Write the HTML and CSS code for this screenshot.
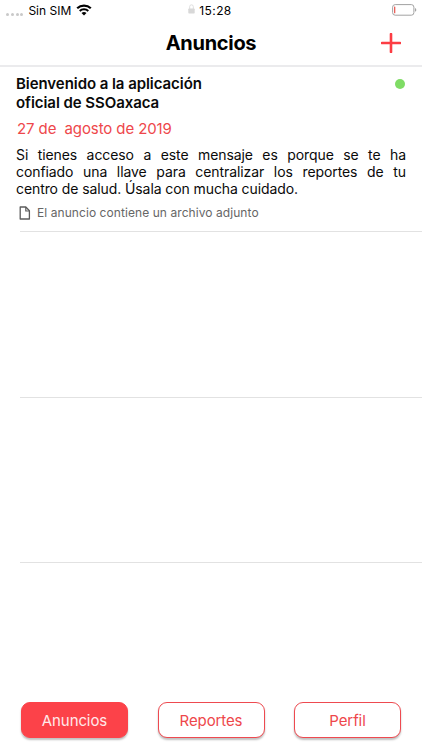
FILE: index.html
```html
<!DOCTYPE html>
<html lang="es">
<head>
  <meta charset="UTF-8" />
  <meta name="viewport" content="width=device-width, initial-scale=1.0" />
  <title>Anuncios</title>
  <link rel="stylesheet" href="styles.css">
</head>
<body>

  <!-- Barra de estado -->
  <div class="status-bar">
    <div class="carrier">
      <span class="signal"><i></i><i></i><i></i><i></i></span>
      <span class="carrier-name">Sin SIM</span>
      <svg class="wifi" viewBox="0 0 16 12" width="16" height="12">
        <path d="M1.2 4.3a9.8 9.8 0 0 1 13.6 0" fill="none" stroke="#000" stroke-width="2.2" />
        <path d="M3.7 7a6.2 6.2 0 0 1 8.6 0" fill="none" stroke="#000" stroke-width="2" />
        <path d="M8 11.6L5.5 9.1a3.6 3.6 0 0 1 5 0z" fill="#000" />
      </svg>
    </div>
    <div class="clock">
      <svg class="lock" viewBox="0 0 7 10" width="7" height="10">
        <path d="M1.7 5V2.6a1.8 1.8 0 0 1 3.6 0V5" fill="none" stroke="#dedede" />
        <rect x="0.3" y="4.5" width="6.4" height="5" rx="0.7" fill="#d8d8d8" />
      </svg>
      <span>15:28</span>
    </div>
    <svg class="battery" viewBox="0 0 25 12" width="25" height="12">
      <rect x="0.6" y="0.6" width="21.3" height="10.6" rx="2.6" fill="none" stroke="#a2a2a2" />
      <rect x="2.1" y="2.5" width="1.2" height="6.8" rx="0.5" fill="#e8504a" />
      <path d="M23 4v3.8c1.8-.6 1.8-3.2 0-3.8z" fill="#a2a2a2" />
    </svg>
  </div>

  <!-- Encabezado -->
  <header class="navbar">
    <h1>Anuncios</h1>
    <svg class="add" viewBox="0 0 20 20" width="20" height="20">
      <path d="M10 1v18M1 10h18" stroke="#fc3d44" stroke-width="2.6" stroke-linecap="round" />
    </svg>
  </header>

  <!-- Lista de anuncios -->
  <main class="list">
    <article class="row">
      <div class="row-head">
        <h2>Bienvenido a la aplicación<br>oficial de SSOaxaca</h2>
        <span class="dot"></span>
      </div>
      <p class="date">27 de&nbsp; agosto de 2019</p>
      <div class="message">
        <p>Si tienes acceso a este mensaje es porque se te ha</p>
        <p>confiado una llave para centralizar los reportes de tu</p>
        <p class="last">centro de salud. Úsala con mucha cuidado.</p>
      </div>
      <div class="attachment">
        <svg viewBox="0 0 12 14" width="12" height="14">
          <path d="M1.2 1h5.6L10.4 4.8V13H1.2z" fill="none" stroke="#5c5c5c" stroke-width="1.3" stroke-linejoin="round" />
          <path d="M6.8 1v4h3.6" fill="none" stroke="#5c5c5c" stroke-width="1.2" />
        </svg>
        <span>El anuncio contiene un archivo adjunto</span>
      </div>
    </article>
    <div class="row"></div>
    <div class="row"></div>
  </main>

  <!-- Menú inferior -->
  <nav class="tabs">
    <button class="tab active">Anuncios</button>
    <button class="tab">Reportes</button>
    <button class="tab">Perfil</button>
  </nav>

</body>
</html>
```

FILE: styles.css
```css
* {
  box-sizing: border-box;
}

body {
  margin: 0;
  height: 750px;
  display: flex;
  flex-direction: column;
  overflow: hidden;
  background: #fff;
  color: #0a0a0a;
  font-family: Inter, 'Liberation Sans', sans-serif;
}

h1,
h2,
p {
  margin: 0;
}

/* Barra de estado */
.status-bar {
  display: grid;
  grid-template-columns: 1fr auto 1fr;
  align-items: center;
  height: 20px;
  padding: 0 5px 0 6px;
  font-size: 12px;
  color: #000;
}

.carrier,
.clock {
  display: flex;
  align-items: center;
}

.signal {
  display: flex;
  gap: 1.8px;
  padding-top: 8px;
}

.signal i {
  width: 3px;
  height: 3px;
  border-radius: 50%;
  background: #c9c9c9;
}

.carrier-name {
  margin: 0 5px 0 5px;
}

.clock {
  gap: 4px;
  margin-right: 3px;
  letter-spacing: 0.4px;
}

.lock {
  margin-top: -3px;
}

.battery {
  justify-self: end;
}

/* Encabezado */
.navbar {
  display: grid;
  grid-template-columns: 1fr auto 1fr;
  align-items: center;
  height: 47px;
  padding-right: 21px;
  padding-left: 21px;
  border-bottom: 2px solid #ebebed;
}

.navbar h1 {
  grid-column: 2;
  font-size: 20px;
  font-weight: 700;
  line-height: 24px;
  letter-spacing: -0.3px;
  color: #000;
}

.add {
  justify-self: end;
}

/* Lista */
.list {
  flex: 1;
}

.row {
  position: relative;
  height: 165.6px;
  padding: 8px 16px 0;
}

.row:first-child {
  height: 165px;
}

/* Línea separadora */
.row::after {
  content: '';
  position: absolute;
  left: 20px;
  right: 0;
  bottom: 0;
  height: 1px;
  background: #e2e2e2;
}

.row-head {
  display: flex;
  justify-content: space-between;
}

.row h2 {
  font-size: 15px;
  font-weight: 600;
  line-height: 18.5px;
  letter-spacing: -0.06px;
}

.dot {
  width: 10px;
  height: 10px;
  margin: 4px 1px 0 0;
  border-radius: 50%;
  background: #7fdc65;
}

.date {
  margin: 7px 0 0 1px;
  font-size: 15px;
  line-height: 20px;
  letter-spacing: -0.1px;
  color: #ee474b;
}

.message {
  margin-top: 7px;
  font-size: 14px;
  line-height: 17px;
  letter-spacing: -0.09px;
}

.message p {
  white-space: nowrap;
  text-align: justify;
  text-align-last: justify;
}

.message .last {
  text-align-last: left;
}

.attachment {
  display: flex;
  align-items: center;
  gap: 6px;
  margin: 7px 0 0 3px;
  font-size: 12px;
  line-height: 18px;
  letter-spacing: 0.07px;
  color: #666;
}

/* Menú inferior */
.tabs {
  display: flex;
  justify-content: space-between;
  padding: 0 21px 12px;
}

.tab {
  width: 107px;
  height: 36px;
  padding: 0;
  border: 1px solid #ee4a50;
  border-radius: 9px;
  background: #fff;
  box-shadow: 0 2px 2px rgba(0, 0, 0, 0.25);
  color: #ee474b;
  font-family: inherit;
  font-size: 15px;
  letter-spacing: -0.1px;
}

.tab.active {
  border-color: #fc4249;
  background: #fc4249;
  color: #ffe9e9;
}
```
